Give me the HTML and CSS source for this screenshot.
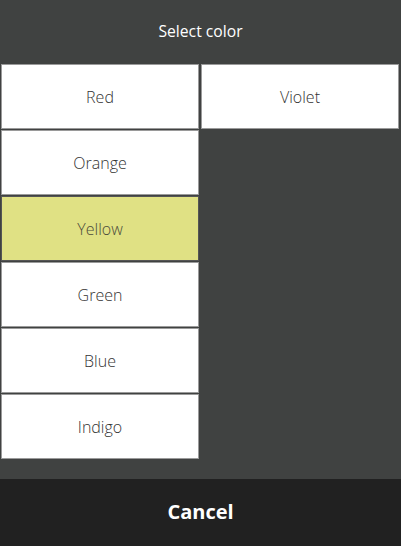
FILE: index.html
```html
<!DOCTYPE html>
<html>
<head>
<meta charset="utf-8">
<link rel="stylesheet" href="styles.css">
</head>
<body>
<div class="flyout">
  <div class="title">Select color</div>
  <div class="grid">
    <div class="col">
      <div class="item">Red</div>
      <div class="item">Orange</div>
      <div class="item selected">Yellow</div>
      <div class="item">Green</div>
      <div class="item">Blue</div>
      <div class="item">Indigo</div>
    </div>
    <div class="col">
      <div class="item">Violet</div>
    </div>
  </div>
  <div class="spacer"></div>
  <div class="footer">Cancel</div>
</div>
</body>
</html>
```
FILE: styles.css
```css
html, body {
  margin: 0;
  padding: 0;
  background: #404241;
}
.flyout {
  width: 401px;
  height: 546px;
  display: flex;
  flex-direction: column;
  background: #404241;
  font-family: "Open Sans", "Noto Sans", sans-serif;
}
.title {
  height: 64px;
  display: flex;
  align-items: center;
  justify-content: center;
  color: #ffffff;
  font-size: 15.7px;
  padding-bottom: 2px;
  box-sizing: border-box;
}
.grid {
  display: flex;
  gap: 2px;
  padding-left: 1px;
}
.col {
  display: flex;
  flex-direction: column;
  gap: 1px;
  width: 198px;
}
.item {
  height: 65px;
  box-sizing: border-box;
  border: 1px solid #9a9a9a;
  background: #ffffff;
  color: #333333;
  font-size: 16px;
  font-weight: 300;
  display: flex;
  align-items: center;
  justify-content: center;
}
.item.selected {
  background: #e0e184;
  border-color: #555555;
  color: #4a4a3a;
}
.spacer {
  flex: 1;
}
.footer {
  height: 67px;
  background: #212121;
  color: #ffffff;
  font-size: 20px;
  font-weight: 700;
  display: flex;
  align-items: center;
  justify-content: center;
  padding-bottom: 2px;
  box-sizing: border-box;
}
```
